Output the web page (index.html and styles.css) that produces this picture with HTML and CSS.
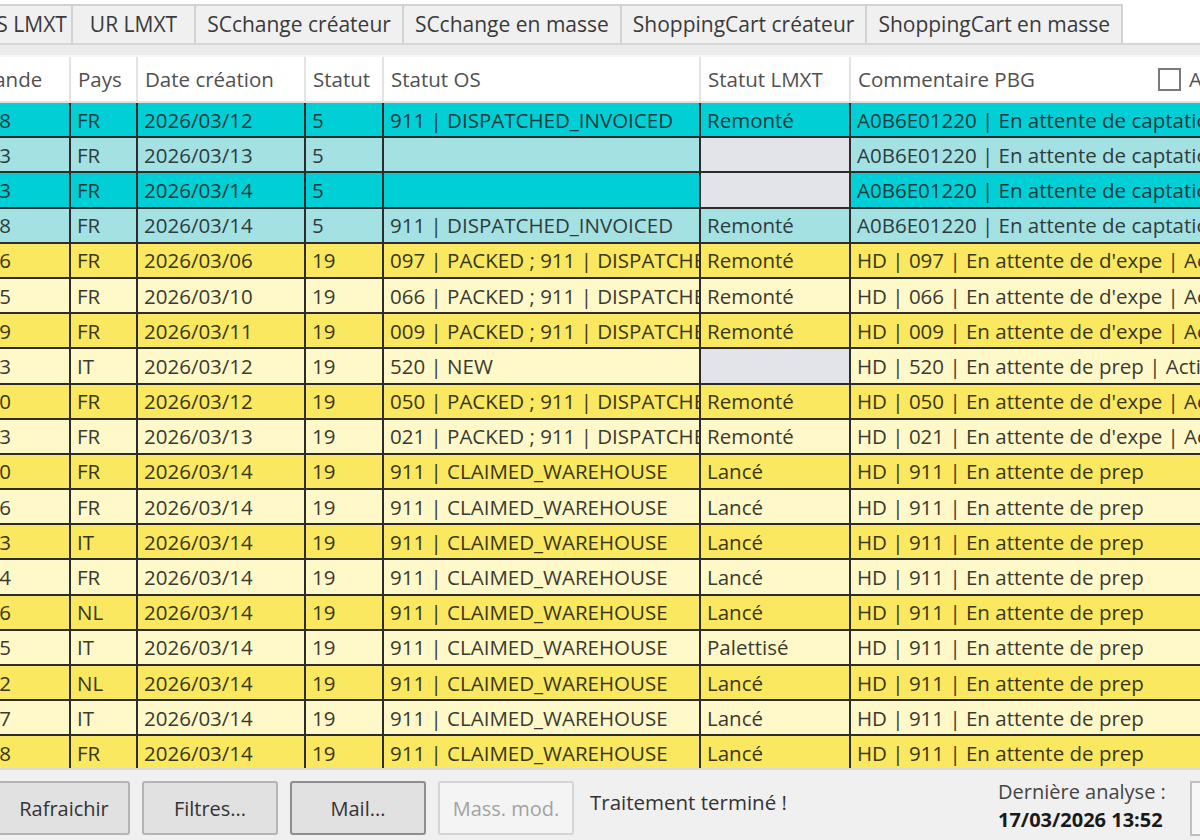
FILE: index.html
```html
<!DOCTYPE html>
<html lang="fr">
<head>
    <meta charset="UTF-8">
    <link rel="stylesheet" href="styles.css">
    <title>Suivi commandes</title>
</head>
<body>
    <div class="tabs">
        <div class="tab first">OS LMXT</div>
        <div class="tab wide">UR LMXT</div>
        <div class="tab">SCchange créateur</div>
        <div class="tab">SCchange en masse</div>
        <div class="tab">ShoppingCart créateur</div>
        <div class="tab">ShoppingCart en masse</div>
    </div>
    <div class="page-top"></div>

    <div class="grid-wrap">
        <label class="head-check"><span class="box"></span>Afficher tout</label>
        <table class="grid">
            <colgroup>
                <col class="c-cmd"><col class="c-pays"><col class="c-date"><col class="c-stat">
                <col class="c-os"><col class="c-lmxt"><col class="c-com">
            </colgroup>
            <thead>
                <tr><th>Commande</th><th>Pays</th><th>Date création</th><th>Statut</th><th>Statut OS</th><th>Statut LMXT</th><th>Commentaire PBG</th></tr>
            </thead>
            <tbody>
                <tr class="cyan"><td>41202538</td><td>FR</td><td>2026/03/12</td><td>5</td><td>911 | DISPATCHED_INVOICED</td><td>Remonté</td><td>A0B6E01220 | En attente de captation</td></tr>
                <tr class="cyan-lt"><td>41202613</td><td>FR</td><td>2026/03/13</td><td>5</td><td></td><td class="empty"></td><td>A0B6E01220 | En attente de captation</td></tr>
                <tr class="cyan"><td>41202713</td><td>FR</td><td>2026/03/14</td><td>5</td><td></td><td class="empty"></td><td>A0B6E01220 | En attente de captation</td></tr>
                <tr class="cyan-lt"><td>41202728</td><td>FR</td><td>2026/03/14</td><td>5</td><td>911 | DISPATCHED_INVOICED</td><td>Remonté</td><td>A0B6E01220 | En attente de captation</td></tr>
                <tr class="yel"><td>41201996</td><td>FR</td><td>2026/03/06</td><td>19</td><td>097 | PACKED ; 911 | DISPATCHED</td><td>Remonté</td><td>HD | 097 | En attente de d'expe | Action</td></tr>
                <tr class="yel-lt"><td>41202385</td><td>FR</td><td>2026/03/10</td><td>19</td><td>066 | PACKED ; 911 | DISPATCHED</td><td>Remonté</td><td>HD | 066 | En attente de d'expe | Action</td></tr>
                <tr class="yel"><td>41202469</td><td>FR</td><td>2026/03/11</td><td>19</td><td>009 | PACKED ; 911 | DISPATCHED</td><td>Remonté</td><td>HD | 009 | En attente de d'expe | Action</td></tr>
                <tr class="yel-lt"><td>41202543</td><td>IT</td><td>2026/03/12</td><td>19</td><td>520 | NEW</td><td class="empty"></td><td>HD | 520 | En attente de prep | Action</td></tr>
                <tr class="yel"><td>41202550</td><td>FR</td><td>2026/03/12</td><td>19</td><td>050 | PACKED ; 911 | DISPATCHED</td><td>Remonté</td><td>HD | 050 | En attente de d'expe | Action</td></tr>
                <tr class="yel-lt"><td>41202623</td><td>FR</td><td>2026/03/13</td><td>19</td><td>021 | PACKED ; 911 | DISPATCHED</td><td>Remonté</td><td>HD | 021 | En attente de d'expe | Action</td></tr>
                <tr class="yel"><td>41202740</td><td>FR</td><td>2026/03/14</td><td>19</td><td>911 | CLAIMED_WAREHOUSE</td><td>Lancé</td><td>HD | 911 | En attente de prep</td></tr>
                <tr class="yel-lt"><td>41202746</td><td>FR</td><td>2026/03/14</td><td>19</td><td>911 | CLAIMED_WAREHOUSE</td><td>Lancé</td><td>HD | 911 | En attente de prep</td></tr>
                <tr class="yel"><td>41202753</td><td>IT</td><td>2026/03/14</td><td>19</td><td>911 | CLAIMED_WAREHOUSE</td><td>Lancé</td><td>HD | 911 | En attente de prep</td></tr>
                <tr class="yel-lt"><td>41202754</td><td>FR</td><td>2026/03/14</td><td>19</td><td>911 | CLAIMED_WAREHOUSE</td><td>Lancé</td><td>HD | 911 | En attente de prep</td></tr>
                <tr class="yel"><td>41202756</td><td>NL</td><td>2026/03/14</td><td>19</td><td>911 | CLAIMED_WAREHOUSE</td><td>Lancé</td><td>HD | 911 | En attente de prep</td></tr>
                <tr class="yel-lt"><td>41202765</td><td>IT</td><td>2026/03/14</td><td>19</td><td>911 | CLAIMED_WAREHOUSE</td><td>Palettisé</td><td>HD | 911 | En attente de prep</td></tr>
                <tr class="yel"><td>41202772</td><td>NL</td><td>2026/03/14</td><td>19</td><td>911 | CLAIMED_WAREHOUSE</td><td>Lancé</td><td>HD | 911 | En attente de prep</td></tr>
                <tr class="yel-lt"><td>41202777</td><td>IT</td><td>2026/03/14</td><td>19</td><td>911 | CLAIMED_WAREHOUSE</td><td>Lancé</td><td>HD | 911 | En attente de prep</td></tr>
                <tr class="yel"><td>41202788</td><td>FR</td><td>2026/03/14</td><td>19</td><td>911 | CLAIMED_WAREHOUSE</td><td>Lancé</td><td>HD | 911 | En attente de prep</td></tr>
            </tbody>
        </table>
    </div>

    <footer class="bottom">
        <button class="btn">Rafraichir</button>
        <button class="btn">Filtres...</button>
        <button class="btn focus">Mail...</button>
        <button class="btn" disabled>Mass. mod.</button>
        <p class="status">Traitement terminé !</p>
        <div class="analyse">
            <span>Dernière analyse :</span>
            <b>17/03/2026 13:52</b>
        </div>
        <div class="side-box"></div>
    </footer>
</body>
</html>
```

FILE: styles.css
```css
* {
    box-sizing: border-box;
}

body {
    margin: 0;
    width: 1200px;
    height: 840px;
    overflow: hidden;
    background-color: #ffffff;
    font-family: "Open Sans", "Noto Sans", sans-serif;
    font-size: 20.5px;
    color: #333333;
    display: flex;
    flex-direction: column;
}

/* onglets */
.tabs {
    display: flex;
    flex-shrink: 0;
    height: 43px;
    padding-top: 4px;
    margin-left: -33px;
}
.tab {
    padding: 0 11px;
    line-height: 37px;
    font-size: 21px;
    background-color: #f0f0f0;
    border: 2px solid #d2d2d2;
    border-bottom: none;
    margin-right: -2px;
    color: #3a3a3a;
    white-space: nowrap;
}
.tab.first {
    padding-right: 4px;
}
.tab.wide {
    padding: 0 17px;
}
.page-top {
    flex-shrink: 0;
    height: 14px;
    background-color: #ebebeb;
    border-top: 2px solid #d6d6d6;
    border-bottom: 2px solid #f7f7f7;
}

/* grille */
.grid-wrap {
    position: relative;
    flex-shrink: 0;
    height: 711px;
    overflow: hidden;
}
.grid {
    border-collapse: collapse;
    table-layout: fixed;
    width: 1364px;
    margin-left: -96px;
}
.c-cmd { width: 166px; }
.c-pays { width: 67px; }
.c-date { width: 168px; }
.c-stat { width: 78px; }
.c-os { width: 317px; }
.c-lmxt { width: 150px; }
.c-com { width: 418px; }

.grid th {
    height: 45px;
    text-align: left;
    font-weight: normal;
    color: #505050;
    padding: 0 7px;
    background-color: #ffffff;
    border-right: 2px solid #e4e4e4;
    border-bottom: 2px solid #e0e0e0;
    white-space: nowrap;
    overflow: hidden;
}
.grid th:first-child {
    padding-left: 27px;
}
.grid td {
    height: 35.2px;
    padding: 0 6px;
    white-space: nowrap;
    overflow: hidden;
    text-overflow: clip;
    border-right: 2px solid #2c2c2c;
    border-bottom: 2px solid #2c2c2c;
    line-height: 30px;
}
.grid td:first-child {
    text-align: right;
    padding-right: 58px;
}

.cyan td { background-color: #00cfd6; color: #153a3c; }
.cyan-lt td { background-color: #a4e1e3; color: #2f3c3d; }
.yel td { background-color: #f9e860; color: #3a3618; }
.yel-lt td { background-color: #fff9c9; color: #3b3a30; }
.grid td.empty { background-color: #e3e3ea; }

.head-check {
    position: absolute;
    top: 9px;
    left: 1158px;
    display: flex;
    align-items: center;
    gap: 8px;
    color: #505050;
    white-space: nowrap;
    background-color: #ffffff;
    height: 26px;
}
.head-check .box {
    width: 23px;
    height: 23px;
    border: 2px solid #7a7a7a;
    background-color: #ffffff;
}

/* barre du bas */
.bottom {
    flex: 1;
    min-height: 0;
    background-color: #f0f0f0;
    display: flex;
    align-items: flex-start;
    padding-top: 11px;
    border-top: 2px solid #dcdcdc;
}
.btn {
    flex-shrink: 0;
    width: 136px;
    height: 54px;
    margin-right: 12px;
    font-family: inherit;
    font-size: 20px;
    color: #333333;
    background-color: #e1e1e1;
    border: 2px solid #b4b4b4;
    border-radius: 3px;
}
.btn:first-child {
    width: 132px;
    margin-left: -2px;
}
.btn.focus {
    border-color: #8e8e8e;
}
.btn:disabled {
    color: #a2a2a2;
    background-color: #f4f4f4;
    border-color: #d4d4d4;
}
.status {
    flex-shrink: 0;
    margin: 7px 0 0 0;
    padding-left: 4px;
    width: 412px;
    color: #333333;
    white-space: nowrap;
}
.analyse {
    flex-shrink: 0;
    display: flex;
    flex-direction: column;
    line-height: 28px;
    margin-top: -3px;
    width: 192px;
    font-size: 20px;
    color: #444444;
    white-space: nowrap;
}
.analyse b {
    color: #1a1a1a;
}
.side-box {
    flex-shrink: 0;
    width: 40px;
    height: 55px;
    border: 2px solid #c0c0c0;
    background-color: #f7f7f7;
}
```
